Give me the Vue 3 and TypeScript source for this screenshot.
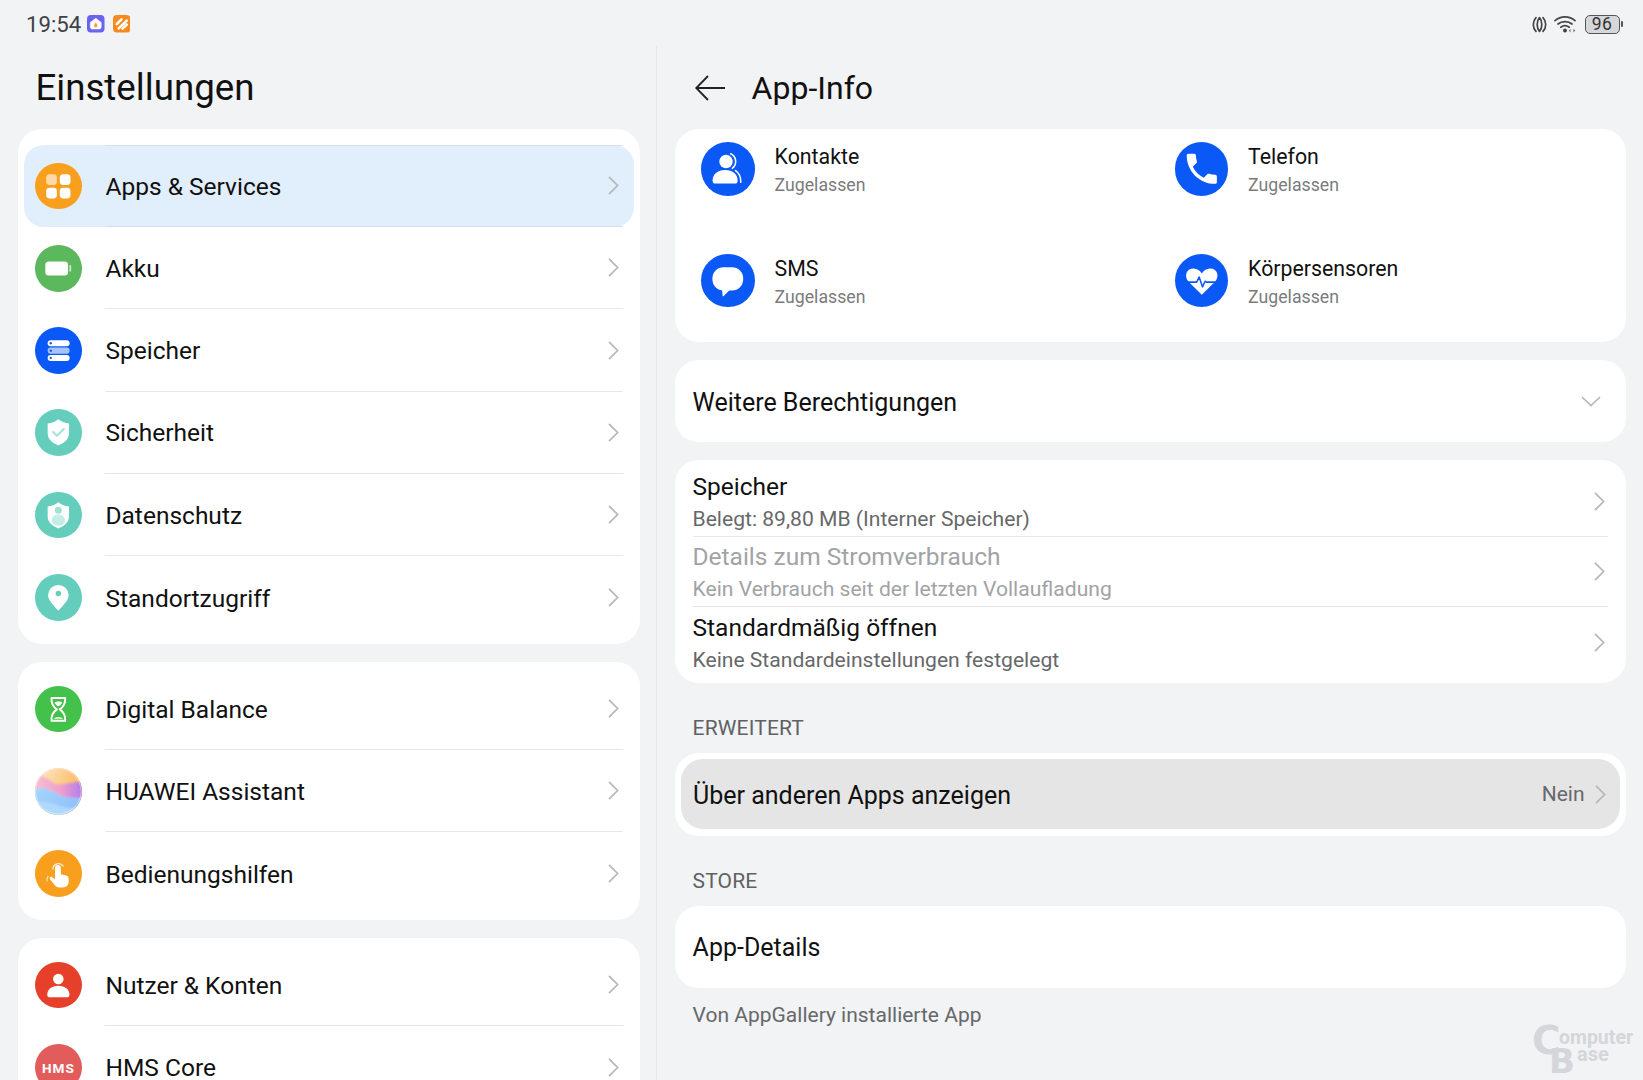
<script setup lang="ts">
// 设置页图标，统一 48x48 画布
const glyphs: Record<string, string> = {
  apps: `<rect x="11.5" y="11.5" width="11" height="11" rx="3.5" fill="#fdd9a8"/><rect x="25.5" y="11.5" width="11" height="11" rx="3.5" fill="#fff"/><rect x="11.5" y="25.5" width="11" height="11" rx="3.5" fill="#fff"/><rect x="25.5" y="25.5" width="11" height="11" rx="3.5" fill="#fff"/>`,
  battery: `<rect x="10.6" y="17" width="23.4" height="14.4" rx="3.6" fill="#fff"/><rect x="35.4" y="20.6" width="1.8" height="6.8" rx=".9" fill="#cfe9cf"/>`,
  storage: `<rect x="13" y="13.6" width="22.6" height="6.2" rx="3.1" fill="#fff"/><rect x="13" y="21.2" width="22.6" height="6.2" rx="3.1" fill="#a6c3fb"/><rect x="13" y="28.8" width="22.6" height="6.2" rx="3.1" fill="#fff"/><circle cx="16.2" cy="16.7" r="1.2" fill="#0a59f7"/><circle cx="16.2" cy="24.3" r="1.2" fill="#0a59f7"/><circle cx="16.2" cy="31.9" r="1.2" fill="#0a59f7"/>`,
  shield: `<path d="M24 10.6C27.5 13.2 31 14.6 35 15V25C35 31 30.5 35 24 37.4C17.5 35 13 31 13 25V15C17 14.6 20.5 13.2 24 10.6Z" fill="#fff"/><path d="M18.6 23.6L22.6 27.6L29.6 20.6" fill="none" stroke="#a6e2d8" stroke-width="2.2" stroke-linecap="round" stroke-linejoin="round"/>`,
  privacy: `<path d="M24 10.6C27.5 13.2 31 14.6 35 15V25C35 31 30.5 35 24 37.4C17.5 35 13 31 13 25V15C17 14.6 20.5 13.2 24 10.6Z" fill="#fff"/><circle cx="24" cy="18.8" r="3.6" fill="#a3e0d5"/><ellipse cx="24" cy="29" rx="6.8" ry="5.8" fill="#c3ede5"/>`,
  pin: `<path d="M24 37.7C20 33 13.4 27.4 13.4 21.8A10.6 10.6 0 0 1 34.6 21.8C34.6 27.4 28 33 24 37.7Z" fill="#fff"/><circle cx="24" cy="20" r="2.8" fill="#64cdbc"/>`,
  hourglass: `<path d="M17 12.4H31C31.4 17.6 29.4 21.4 25.4 24C29.4 26.6 31.4 30.4 31 35.8H17C16.6 30.4 18.6 26.6 22.6 24C18.6 21.4 16.6 17.6 17 12.4Z" fill="none" stroke="#fff" stroke-width="2" stroke-linejoin="round"/><path d="M20 16.6C22 15.6 26 15.6 28 16.6C27.4 18.6 25.8 20 24 20.8C22.2 20 20.6 18.6 20 16.6ZM19.4 33.6C20.8 31.6 27.2 31.6 28.6 33.6Z" fill="#fff"/>`,
  assistant: `<defs><linearGradient id="as-top" x1="0" y1="0" x2="1" y2=".5"><stop offset="0" stop-color="#fdeccb"/><stop offset="1" stop-color="#fab45a"/></linearGradient><linearGradient id="as-mid" x1="0" y1="0" x2="1" y2="0"><stop offset="0" stop-color="#f8c4d4"/><stop offset=".55" stop-color="#ef9fcc"/><stop offset="1" stop-color="#a876f2"/></linearGradient><linearGradient id="as-low" x1="0" y1="0" x2="1" y2="1"><stop offset="0" stop-color="#a8d8fc"/><stop offset="1" stop-color="#85b8fa"/></linearGradient><filter id="as-blur" x="-10%" y="-10%" width="120%" height="120%"><feGaussianBlur stdDeviation="1.1"/></filter></defs><rect width="48" height="48" fill="url(#as-top)"/><g filter="url(#as-blur)"><path d="M-4 8C6 6 12 10 18 15C24 20 36 14 52 14V36H-4Z" fill="url(#as-mid)"/><path d="M-4 23C8 19 14 21 20 25C28 30 40 32 52 30V52H-4Z" fill="url(#as-low)"/><path d="M-4 36C10 32 18 36 26 39C34 42 42 41 52 38V52H-4Z" fill="#aed8fc"/></g><circle cx="24" cy="24" r="23.4" fill="none" stroke="#fff" stroke-opacity=".45" stroke-width="1"/>`,
  hand: `<path d="M20.6 18.4a3 3 0 0 1 6 0V25l5.6 1.2a3 3 0 0 1 2.4 3V32.5c0 3.8-2.4 6-6 6h-3.4c-2.4 0-3.8-.9-5.2-2.8l-4.6-5.6c-1.2-1.6.8-3.4 2.4-2.2l2.8 2.2Z" fill="#fff"/><path d="M18.4 19.6a5.8 5.8 0 0 1 10.6-3" fill="none" stroke="#fff" stroke-opacity=".8" stroke-width="1.4" stroke-linecap="round"/><path d="M13.4 27.2c-1 1.4-1.4 3-1 4.6" fill="none" stroke="#fff" stroke-opacity=".7" stroke-width="1.3" stroke-linecap="round"/>`,
  user: `<circle cx="24" cy="17.5" r="5.4" fill="#fff"/><path d="M12.6 33.6C12.6 28 17.4 24.4 24 24.4S35.4 28 35.4 33.6C35.4 35.4 34.4 36.3 32.6 36.3H15.4C13.6 36.3 12.6 35.4 12.6 33.6Z" fill="#fff"/>`,
  hms: `<text x="24" y="29.4" text-anchor="middle" font-family="Roboto, sans-serif" font-size="14" font-weight="700" letter-spacing="1" fill="#fff">HMS</text>`,
  contacts: `<circle cx="22.4" cy="17.4" r="6" fill="#fff"/><path d="M10.4 34.4C10.4 29 14.6 25 21.6 25S32.8 29 32.8 34.4C32.8 36.4 32 37.2 30.2 37.2H13C11.2 37.2 10.4 36.4 10.4 34.4Z" fill="#fff"/><path d="M26.6 10.6A7.6 7.6 0 0 1 28 23.6M31 25.6C34.2 27.8 35.8 31.4 35.6 36" fill="none" stroke="#fff" stroke-width="1.4" stroke-linecap="round"/>`,
  phone: `<path transform="translate(6 6) scale(1.5)" d="M6.62 10.79c1.44 2.83 3.76 5.14 6.59 6.59l2.2-2.2c.27-.27.67-.36 1.02-.24 1.12.37 2.33.57 3.57.57.55 0 1 .45 1 1V20c0 .55-.45 1-1 1-9.39 0-17-7.61-17-17 0-.55.45-1 1-1h3.5c.55 0 1 .45 1 1 0 1.25.2 2.45.57 3.57.11.35.03.74-.25 1.02l-2.2 2.2z" fill="#fff"/>`,
  sms: `<rect x="10.2" y="11.9" width="27.6" height="20.8" rx="10" fill="#fff"/><path d="M18.6 30L19.4 37.4C19.5 38 20 38.1 20.4 37.7L27 31Z" fill="#fff"/>`,
  heart: `<path d="M24 36.5L12 24.6C8 20 10 13 16.6 13C20 13 22.5 15 24 17.5C25.5 15 28 13 31.4 13C38 13 40 20 36 24.6Z" fill="#fff"/><path d="M9 25.2H19.4L21.6 20.6L24.6 29.4L27 24.4L28.2 25.2H39" fill="none" stroke="#0a59f7" stroke-width="1.4" stroke-linejoin="round"/>`,
}

const menuGroups = [
  [
    { label: 'Apps & Services', icon: 'apps', color: '#f99f1e', active: true },
    { label: 'Akku', icon: 'battery', color: '#5cb85c' },
    { label: 'Speicher', icon: 'storage', color: '#0a59f7' },
    { label: 'Sicherheit', icon: 'shield', color: '#64cdbc' },
    { label: 'Datenschutz', icon: 'privacy', color: '#64cdbc' },
    { label: 'Standortzugriff', icon: 'pin', color: '#64cdbc' },
  ],
  [
    { label: 'Digital Balance', icon: 'hourglass', color: '#43c14a' },
    { label: 'HUAWEI Assistant', icon: 'assistant', color: '#fbc9c4' },
    { label: 'Bedienungshilfen', icon: 'hand', color: '#f99f1e' },
  ],
  [
    { label: 'Nutzer & Konten', icon: 'user', color: '#e6402a' },
    { label: 'HMS Core', icon: 'hms', color: '#e25c5c' },
  ],
]

const permissions = [
  { label: 'Kontakte', icon: 'contacts' },
  { label: 'Telefon', icon: 'phone' },
  { label: 'SMS', icon: 'sms' },
  { label: 'Körpersensoren', icon: 'heart' },
]

const infoRows = [
  { title: 'Speicher', sub: 'Belegt: 89,80 MB (Interner Speicher)' },
  { title: 'Details zum Stromverbrauch', sub: 'Kein Verbrauch seit der letzten Vollaufladung', disabled: true },
  { title: 'Standardmäßig öffnen', sub: 'Keine Standardeinstellungen festgelegt' },
]
</script>

<template>
  <div class="page">
    <header class="status">
      <span class="time">19:54</span>
      <svg class="badge" viewBox="0 0 18 18">
        <rect width="18" height="18" rx="4" fill="#6a62f0" />
        <path d="M3.4 7.6L9 3.4L14.6 7.6V12.4C14.6 13.6 13.8 14.4 12.6 14.4H5.4C4.2 14.4 3.4 13.6 3.4 12.4Z" fill="#fff" stroke="#fff" stroke-width=".6" stroke-linejoin="round" />
        <path d="M9 7.8C10 9.2 10.8 10 10.8 11.1A1.8 1.8 0 0 1 7.2 11.1C7.2 10 8 9.2 9 7.8Z" fill="#f7a13c" />
      </svg>
      <svg class="badge second" viewBox="0 0 18 18">
        <rect width="18" height="18" rx="4" fill="#f78a1f" />
        <path d="M3.8 9.4L8.8 4.4M5.8 13.8L14.2 5.8M9.8 14L14.2 9.8" fill="none" stroke="#fff" stroke-width="2.6" stroke-linecap="round" />
      </svg>
      <div class="status-right">
        <svg class="nfc" viewBox="0 0 15 17">
          <path d="M4 1.6C.4 5.4 .4 11.6 4 15.4M11 1.6C14.6 5.4 14.6 11.6 11 15.4M7.5 1.6C4.4 5 4.4 12 7.5 15.4C10.6 12 10.6 5 7.5 1.6Z" fill="none" stroke="#444" stroke-width="1.7" stroke-linecap="round" stroke-linejoin="round" />
        </svg>
        <svg class="wifi" viewBox="0 0 23 18">
          <path d="M1 5.6C6.6 .6 15.4 .6 21 5.6M4 9C7.8 5.8 14.2 5.8 18 9M6.8 12.2C9.2 10.4 12.8 10.4 15.2 12.2" fill="none" stroke="#444" stroke-width="1.7" stroke-linecap="round" />
          <circle cx="11" cy="15.6" r="2" fill="#444" />
          <path d="M16.6 13.8L14.8 15.6L16.6 17.4ZM19.4 13.8L21.4 15.6L19.4 17.4Z" fill="#777" />
        </svg>
        <div class="battery"><span>96</span></div>
        <i class="battery-tip"></i>
      </div>
    </header>

    <main class="main">
      <section class="left">
        <h1 class="title">Einstellungen</h1>
        <div v-for="(group, i) in menuGroups" :key="i" class="menu-card">
          <div v-for="item in group" :key="item.label" class="menu-row" :class="{ active: item.active }">
            <svg class="menu-icon" viewBox="0 0 48 48" :style="{ background: item.color }" v-html="glyphs[item.icon]"></svg>
            <div class="menu-body">
              <span class="menu-label">{{ item.label }}</span>
              <svg class="chev" viewBox="0 0 11 19"><path d="M1 .8L9.6 9.5L1 18.2" /></svg>
            </div>
          </div>
        </div>
      </section>

      <section class="right">
        <div class="app-head">
          <svg class="back" viewBox="0 0 31 26"><path d="M30 13H1.6M13 1L1.2 13L13 25" /></svg>
          <h2 class="app-title">App-Info</h2>
        </div>

        <div class="card perms">
          <div v-for="p in permissions" :key="p.label" class="perm">
            <svg class="perm-icon" viewBox="0 0 48 48" v-html="glyphs[p.icon]"></svg>
            <div>
              <div class="perm-name">{{ p.label }}</div>
              <div class="perm-state">Zugelassen</div>
            </div>
          </div>
        </div>

        <div class="card single">
          <span class="row-title">Weitere Berechtigungen</span>
          <svg class="chev-down" viewBox="0 0 20 11"><path d="M1 1L10 9.6L19 1" /></svg>
        </div>

        <div class="card info">
          <div v-for="row in infoRows" :key="row.title" class="info-row" :class="{ disabled: row.disabled }">
            <div class="info-text">
              <div class="info-title">{{ row.title }}</div>
              <div class="info-sub">{{ row.sub }}</div>
            </div>
            <svg class="chev" viewBox="0 0 11 19"><path d="M1 .8L9.6 9.5L1 18.2" /></svg>
          </div>
        </div>

        <div class="section-label">ERWEITERT</div>
        <div class="card pressed-card">
          <div class="pressed">
            <span class="row-title">Über anderen Apps anzeigen</span>
            <span class="value">Nein</span>
            <svg class="chev" viewBox="0 0 11 19"><path d="M1 .8L9.6 9.5L1 18.2" /></svg>
          </div>
        </div>

        <div class="section-label">STORE</div>
        <div class="card single store">
          <span class="row-title">App-Details</span>
        </div>
        <p class="footnote">Von AppGallery installierte App</p>
      </section>
    </main>

    <div class="watermark">
      <span class="wm-c">C</span><span class="wm-top">omputer</span>
      <span class="wm-b">B</span><span class="wm-bottom">ase</span>
    </div>
  </div>
</template>

<style>
html,
body {
  margin: 0;
  background: #f1f3f5;
}
</style>

<style scoped>
.page {
  position: relative;
  width: 1643px;
  height: 1080px;
  overflow: hidden;
  background: #f1f3f5;
  color: #111;
  font-family: Roboto, "Noto Sans", sans-serif;
}

/* 状态栏 */
.status {
  display: flex;
  align-items: center;
  height: 46px;
  padding: 2px 20px 0 26px;
  box-sizing: border-box;
}

.time {
  font-size: 22.2px;
  color: #3f4144;
  width: 61px;
}

.badge {
  width: 17.5px;
  height: 17.5px;
}

.badge.second {
  margin-left: 8px;
}

.status-right {
  display: flex;
  align-items: center;
  margin-left: auto;
}

.nfc {
  width: 15px;
  height: 17px;
}

.wifi {
  width: 23px;
  height: 18px;
  margin-left: 7px;
}

.battery {
  display: flex;
  align-items: center;
  justify-content: center;
  width: 35px;
  height: 19px;
  margin-left: 8px;
  box-sizing: border-box;
  border: 1.5px solid #555;
  border-radius: 5px;
  background: #d6d7da;
  color: #333;
  font-size: 17.5px;
  letter-spacing: .5px;
}

.battery-tip {
  width: 2px;
  height: 6px;
  margin-left: 1.4px;
  border-radius: 1px;
  background: #555;
}

/* 主体两栏 */
.main {
  display: flex;
  height: 1034px;
}

.left {
  width: 657px;
  padding: 0 16px 0 18px;
  box-sizing: border-box;
  border-right: 1.5px solid #e7e8ea;
}

.title {
  display: flex;
  align-items: center;
  height: 83px;
  margin: 0;
  padding-left: 17.4px;
  font-size: 36.7px;
  font-weight: 400;
}

.menu-card {
  margin-bottom: 17.6px;
  padding: 5.8px 6px;
  border-radius: 24px;
  background: #fff;
}

.menu-card:first-of-type {
  padding-top: 15.8px;
}

.menu-row {
  display: flex;
  align-items: center;
  height: 82.3px;
  padding: 0 11.4px 0 11.2px;
  box-sizing: border-box;
  border-radius: 20px;
}

.menu-row.active {
  background: #e1eefc;
}

.menu-icon {
  flex: none;
  width: 46.7px;
  height: 46.7px;
  border-radius: 50%;
}

.menu-body {
  flex: 1;
  align-self: stretch;
  display: flex;
  align-items: center;
  justify-content: space-between;
  margin-left: 23.6px;
  padding-right: 3.3px;
  border-bottom: 1.2px solid #e6e7e9;
}

.menu-row:last-child .menu-body {
  border-bottom: 0;
}

.menu-row.active .menu-body {
  border-top: 1.2px solid #d5dfea;
  border-bottom-color: #d5dfea;
}

.menu-label {
  padding-top: 1.2px;
  font-size: 24.5px;
}

.chev {
  flex: none;
  width: 11px;
  height: 19px;
}

.chev path,
.chev-down path {
  fill: none;
  stroke: #b6b7b9;
  stroke-width: 1.7;
}

.right {
  flex: 1;
  padding: 0 17.5px 0 18px;
}

.app-head {
  display: flex;
  align-items: center;
  height: 83px;
  padding: 1px 0 0 19.6px;
  box-sizing: border-box;
}

.back {
  width: 31px;
  height: 26px;
}

.back path {
  fill: none;
  stroke: #222;
  stroke-width: 1.8;
}

.app-title {
  margin: 0 0 0 26px;
  font-size: 32px;
  font-weight: 400;
}

.card {
  border-radius: 24px;
  background: #fff;
}

.perms {
  display: grid;
  grid-template-columns: 473.5px 1fr;
  grid-template-rows: 111.4px 1fr;
  height: 213.3px;
  padding: 13.3px 0 0 26px;
  box-sizing: border-box;
  margin-bottom: 18px;
}

.perm {
  display: flex;
  align-items: flex-start;
}

.perm-icon {
  flex: none;
  width: 53.6px;
  height: 53.6px;
  margin-right: 20px;
  border-radius: 50%;
  background: #0a59f7;
}

.perm-name {
  font-size: 21.3px;
  line-height: 29px;
}

.perm-state {
  font-size: 17.7px;
  line-height: 29px;
  color: #7a7b7d;
}

.single {
  display: flex;
  align-items: center;
  justify-content: space-between;
  height: 82px;
  padding: 0 25px 0 17.6px;
  margin-bottom: 18px;
}

.single.store {
  margin-bottom: 13px;
}

.row-title {
  padding-top: 1.6px;
  font-size: 25px;
}

.chev-down {
  width: 20px;
  height: 11px;
}

.info {
  padding: 6.4px 17.5px 5.4px;
}

.info-row {
  display: flex;
  align-items: center;
  justify-content: space-between;
  height: 70.3px;
  padding: 0 3px 0 0;
  box-sizing: border-box;
  border-bottom: 1.2px solid #e6e7e9;
}

.info-row:last-child {
  border-bottom: 0;
}

.info-text {
  padding-top: 3px;
}

.info-title {
  font-size: 24.5px;
  line-height: 32px;
}

.info-sub {
  font-size: 21.1px;
  line-height: 32px;
  color: #67686a;
}

.info-row.disabled .info-title,
.info-row.disabled .info-sub {
  color: #a2a3a5;
}

.section-label {
  height: 70px;
  padding: 32px 0 12px 17.6px;
  box-sizing: border-box;
  font-size: 21px;
  line-height: 26px;
  letter-spacing: .15px;
  color: #606163;
}

.pressed-card {
  padding: 6.3px 6px;
}

.pressed {
  display: flex;
  align-items: center;
  height: 70px;
  padding: 0 14px 0 12px;
  border-radius: 22px;
  background: #e5e5e5;
}

.value {
  margin-left: auto;
  margin-right: 10px;
  font-size: 21px;
  color: #67686a;
}

.footnote {
  margin: 0;
  padding-left: 17.6px;
  font-size: 21px;
  line-height: 28px;
  color: #67686a;
}

/* 水印 */
.watermark {
  position: absolute;
  left: 1532px;
  top: 1022px;
  width: 106px;
  height: 52px;
  font-weight: 700;
  color: #d5d6d9;
}

.watermark span {
  position: absolute;
}

.wm-c {
  left: 0;
  top: 8px;
  font-family: "DejaVu Sans", sans-serif;
  font-size: 39px;
  line-height: .58;
}

.wm-top {
  left: 27px;
  top: 8px;
  font-size: 19.5px;
  line-height: .8;
}

.wm-b {
  left: 17px;
  top: 29px;
  font-family: "DejaVu Sans", sans-serif;
  font-size: 34px;
  line-height: .6;
}

.wm-bottom {
  left: 45px;
  top: 24px;
  font-size: 20px;
  line-height: .8;
}
</style>
